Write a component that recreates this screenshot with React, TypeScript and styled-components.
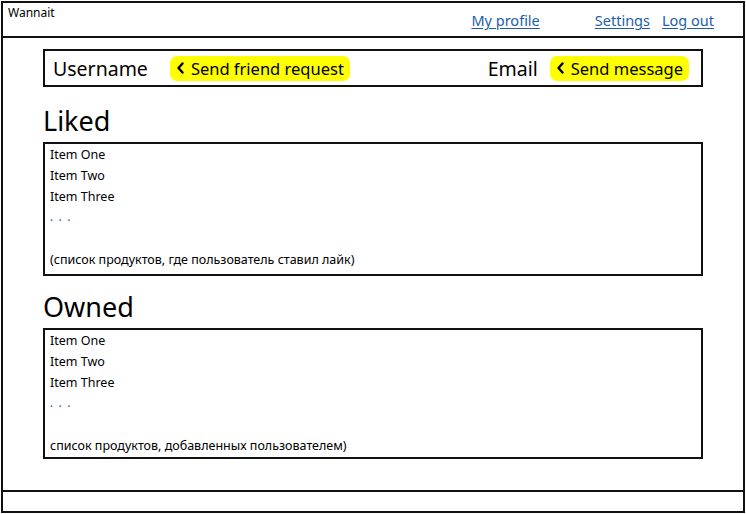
import React from "react";
import styled, { createGlobalStyle } from "styled-components";

const Global = createGlobalStyle`
  html, body { margin: 0; padding: 0; background: #fff; }
  body { font-family: "Noto Sans", "Open Sans", sans-serif; color: #000; }
  * { box-sizing: border-box; }
`;

const Frame = styled.div`
  margin: 1px 0 0 1px;
  width: 744px;
  height: 512px;
  border: 2px solid #111;
  display: flex;
  flex-direction: column;
`;

const Header = styled.header`
  height: 35px;
  border-bottom: 2px solid #111;
  display: flex;
  align-items: flex-start;
  justify-content: space-between;
  padding: 0 29px 0 5px;
`;

const Brand = styled.div`
  font-size: 12px;
  line-height: 14px;
  margin-top: 3px;
`;

const Nav = styled.nav`
  display: flex;
  gap: 12px;
  margin-top: 7px;
`;

const NavLink = styled.a<{ $gapBefore?: number }>`
  font-size: 14.5px;
  line-height: 20px;
  color: #1d5ea8;
  text-decoration: underline;
  text-underline-offset: 2px;
  margin-left: ${(p) => p.$gapBefore ?? 0}px;
  cursor: pointer;
`;

const Main = styled.main`
  flex: 1;
  padding: 11px 40px 0 40px;
  display: flex;
  flex-direction: column;
`;

const ProfileBar = styled.div`
  height: 38px;
  width: 660px;
  border: 2px solid #111;
  display: flex;
  align-items: center;
  padding: 0 12px 0 8px;
`;

const Field = styled.span<{ $push?: boolean }>`
  font-size: 19.5px;
  margin-left: ${(p) => (p.$push ? "auto" : "0")};
  margin-right: ${(p) => (p.$push ? "12px" : "22px")};
`;

const ActionButton = styled.button`
  height: 25px;
  background: #ffff00;
  border: none;
  border-radius: 7px;
  padding: 0 6px 0 6px;
  display: flex;
  align-items: center;
  gap: 6px;
  font-family: inherit;
  font-size: 16.5px;
  color: #000;
  cursor: pointer;
`;

const Chevron = styled.svg`
  width: 9px;
  height: 12px;
`;

const SectionTitle = styled.h2<{ $top: number }>`
  margin: ${(p) => p.$top}px 0 4px 0;
  font-size: 27px;
  font-weight: 400;
  line-height: 34px;
  height: 34px;
`;

const ListBox = styled.div<{ $height: number }>`
  width: 660px;
  height: ${(p) => p.$height}px;
  border: 2px solid #111;
  padding: 0 5px;
  display: flex;
  flex-direction: column;
`;

const Row = styled.div`
  font-size: 12.5px;
  line-height: 21px;
  height: 21px;
`;

const Dots = styled.div`
  height: 21px;
  font-size: 10px;
  font-weight: 700;
  line-height: 21px;
  color: #3d63b8;
  letter-spacing: 6px;
  margin-bottom: 21px;
`;

const Note = styled.div`
  font-size: 12.5px;
  line-height: 21px;
`;

const Footer = styled.footer`
  height: 21px;
  border-top: 2px solid #111;
`;

const ChevronIcon = () => (
  <Chevron viewBox="0 0 9 12">
    <path d="M6.5 1.5 L2.5 6 L6.5 10.5" fill="none" stroke="#000" strokeWidth="2.4" strokeLinecap="round" strokeLinejoin="round" />
  </Chevron>
);

const List = ({ height, note }: { height: number; note: string }) => (
  <ListBox $height={height}>
    <Row>Item One</Row>
    <Row>Item Two</Row>
    <Row>Item Three</Row>
    <Dots>...</Dots>
    <Note>{note}</Note>
  </ListBox>
);

export default function App() {
  return (
    <>
      <Global />
      <Frame>
        <Header>
          <Brand>Wannait</Brand>
          <Nav>
            <NavLink>My profile</NavLink>
            <NavLink $gapBefore={43}>Settings</NavLink>
            <NavLink>Log out</NavLink>
          </Nav>
        </Header>
        <Main>
          <ProfileBar>
            <Field>Username</Field>
            <ActionButton>
              <ChevronIcon />
              Send friend request
            </ActionButton>
            <Field $push>Email</Field>
            <ActionButton>
              <ChevronIcon />
              Send message
            </ActionButton>
          </ProfileBar>
          <SectionTitle $top={17}>Liked</SectionTitle>
          <List height={134} note="(список продуктов, где пользователь ставил лайк)" />
          <SectionTitle $top={14}>Owned</SectionTitle>
          <List height={131} note="список продуктов, добавленных пользователем)" />
        </Main>
        <Footer />
      </Frame>
    </>
  );
}
